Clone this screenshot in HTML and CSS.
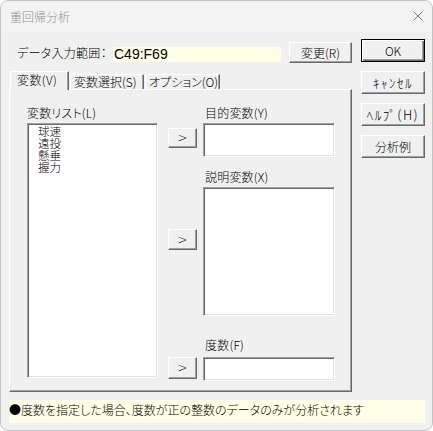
FILE: index.html
```html
<!DOCTYPE html>
<html lang="ja">
<head>
  <meta charset="UTF-8" />
  <title>重回帰分析</title>
  <link rel="stylesheet" href="styles.css">
</head>
<body>
  <div class="window">
    <div class="titlebar">
      <span class="title">重回帰分析</span>
      <svg class="close" width="10" height="10" viewBox="0 0 10 10">
        <path d="M0.5 0.5 L9.5 9.5 M9.5 0.5 L0.5 9.5" stroke="#7a7a7a" stroke-width="1" fill="none"/>
      </svg>
    </div>

    <div class="content">
      <div class="left">
        <div class="range-row">
          <span class="range-label">データ入力範囲：</span>
          <span class="range-value">C49:F69</span>
          <button class="btn btn-change">変更(R)</button>
        </div>

        <div class="tabs">
          <div class="tab active">変数(V)</div>
          <div class="tab t2">変数選択(S)</div>
          <div class="tab t3">オプション(O)</div>
        </div>

        <div class="panel">
          <div class="col-list">
            <div class="label">変数リスト(L)</div>
            <div class="sunken listbox">
              <div>球速</div>
              <div>遠投</div>
              <div>懸垂</div>
              <div>握力</div>
            </div>
          </div>

          <div class="col-arrows">
            <button class="btn arrow a1">&gt;</button>
            <button class="btn arrow a2">&gt;</button>
            <button class="btn arrow a3">&gt;</button>
          </div>

          <div class="col-targets">
            <div class="label">目的変数(Y)</div>
            <div class="sunken box-y"></div>
            <div class="label label-x">説明変数(X)</div>
            <div class="sunken box-x"></div>
            <div class="label label-f">度数(F)</div>
            <div class="sunken box-f"></div>
          </div>
        </div>
      </div>

      <div class="right">
        <button class="btn btn-ok">OK</button>
        <button class="btn btn-hw">ｷｬﾝｾﾙ</button>
        <button class="btn btn-hw">ﾍﾙﾌﾟ(H)</button>
        <button class="btn">分析例</button>
      </div>
    </div>

    <div class="note">●度数を指定した場合、度数が正の整数のデータのみが分析されます</div>
  </div>
</body>
</html>
```

FILE: styles.css
```css
* {
  box-sizing: border-box;
}

body {
  margin: 0;
  background: #ffffff;
  font-family: "Noto Sans CJK JP", "Liberation Sans", sans-serif;
  font-size: 12px;
  font-weight: 300;
  font-feature-settings: "palt";
  color: #000;
}

.window {
  width: 433px;
  height: 431px;
  border: 1px solid #c4c4c4;
  border-radius: 8px;
  background: #f0f0f0;
  overflow: hidden;
}

.titlebar {
  height: 30px;
  display: flex;
  align-items: center;
  justify-content: space-between;
  padding: 0 9px;
  background: #f3f3f3;
}

.title {
  color: #909090;
  font-size: 12px;
}

.content {
  display: flex;
  padding-left: 8px;
}

.left {
  width: 343px;
}

.right {
  width: 64px;
  margin-left: 9px;
  padding-top: 8px;
  display: flex;
  flex-direction: column;
  gap: 9px;
}

/* raised 3d button */
.btn {
  font-family: inherit;
  font-size: 12px;
  font-weight: inherit;
  font-feature-settings: "palt";
  color: #000;
  background: #f0f0f0;
  height: 23px;
  padding: 0;
  margin: 0;
  border: 1px solid;
  border-color: #ffffff #696969 #696969 #ffffff;
  box-shadow: inset -1px -1px #a0a0a0;
  border-radius: 0;
  white-space: nowrap;
}

.btn-hw {
  font-size: 13px;
  letter-spacing: 1.5px;
}

.btn-ok {
  border: 1px solid #000;
  box-shadow: inset 1px 1px #ffffff, inset -1px -1px #696969, inset -2px -2px #a0a0a0;
}

.range-row {
  margin-top: 8px;
  height: 24px;
  display: flex;
  align-items: flex-end;
}

.range-label {
  margin-left: 8px;
  width: 96px;
  line-height: 17px;
  margin-bottom: 2px;
  letter-spacing: 0.3px;
  white-space: nowrap;
}

.range-value {
  width: 168px;
  height: 15px;
  margin-bottom: 1px;
  background: #ffffe6;
  font-family: "Liberation Sans", sans-serif;
  font-weight: 400;
  font-size: 14px;
  line-height: 15px;
  padding-left: 1px;
}

.btn-change {
  width: 63px;
  height: 21px;
  margin-left: auto;
}

.tabs {
  margin-top: 9px;
  height: 17px;
  display: flex;
  align-items: flex-end;
  gap: 1px;
  padding-left: 1px;
  position: relative;
  z-index: 1;
}

.tab {
  height: 15px;
  line-height: 14px;
  padding: 0 0 0 3px;
  border: 1px solid;
  border-bottom: none;
  border-color: #ffffff #696969 #ffffff #ffffff;
  box-shadow: inset -1px 0 #a0a0a0;
  white-space: nowrap;
}

.tab.active {
  width: 59px;
  height: 19px;
  margin-bottom: -1px;
  padding-left: 6px;
  background: #f0f0f0;
  line-height: 16px;
  letter-spacing: 0.4px;
}

.t2 {
  width: 74px;
}

.t3 {
  width: 75px;
}

.panel {
  height: 303px;
  border: 1px solid;
  border-color: #ffffff #696969 #696969 #ffffff;
  box-shadow: inset -1px -1px #a0a0a0;
  padding: 15px 0 0 17px;
  display: flex;
}

.label {
  height: 16px;
  line-height: 16px;
  letter-spacing: 0.2px;
  white-space: nowrap;
}

/* sunken 3d field */
.sunken {
  background: #ffffff;
  border: 1px solid;
  border-color: #a0a0a0 #ffffff #ffffff #a0a0a0;
  box-shadow: inset 1px 1px #696969, inset -1px -1px #e3e3e3;
}

.col-list {
  width: 131px;
}

.listbox {
  margin-top: 2px;
  height: 255px;
  padding: 1px 0 0 10px;
  font-size: 11.5px;
  line-height: 12px;
}

.col-arrows {
  width: 29px;
  margin-left: 10px;
  display: flex;
  flex-direction: column;
}

.arrow {
  width: 29px;
  font-family: "DejaVu Sans", sans-serif;
  font-size: 12px;
}

.a1 {
  margin-top: 23px;
  height: 20px;
}

.a2 {
  margin-top: 81px;
  height: 21px;
}

.a3 {
  margin-top: 107px;
  height: 22px;
}

.col-targets {
  width: 132px;
  margin-left: 6px;
  display: flex;
  flex-direction: column;
}

.col-targets .label {
  padding-left: 2px;
}

.box-y {
  margin-top: 2px;
  height: 34px;
}

.label-x {
  margin-top: 12px;
}

.box-x {
  margin-top: 2px;
  height: 129px;
}

.label-f {
  margin-top: 21px;
}

.box-f {
  margin-top: 4px;
  height: 24px;
}

.note {
  margin: 8px 0 0 8px;
  width: 416px;
  height: 23px;
  background: #ffffe6;
  font-size: 12px;
  line-height: 20px;
}
```
